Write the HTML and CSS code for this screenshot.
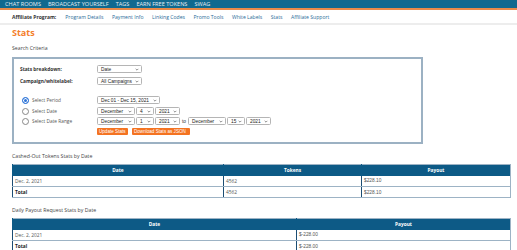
FILE: index.html
```html
<!DOCTYPE html>
<html>
<head>
<meta charset="utf-8">
<link rel="stylesheet" href="styles.css">
</head>
<body>
<div class="topnav">
  <span>Chat Rooms</span><span>Broadcast Yourself</span><span>Tags</span><span>Earn Free Tokens</span><span>Swag</span>
</div>
<div class="subnav">
  <span class="sub-label">Affiliate Program:</span>
  <a>Program Details</a><a>Payment Info</a><a>Linking Codes</a><a>Promo Tools</a><a>White Labels</a><a>Stats</a><a>Affiliate Support</a>
</div>
<div class="main">
  <h1 class="title">Stats</h1>
  <div class="section-title">Search Criteria</div>
  <div class="criteria">
    <div class="row r1">
      <div class="lbl">Stats breakdown:</div>
      <div class="sel w45"><span>Date</span><svg viewBox="0 0 6 4"><polyline points="1,1 3,3 5,1"/></svg></div>
    </div>
    <div class="row r2">
      <div class="lbl">Campaign/whitelabel:</div>
      <div class="sel w45"><span>All Campaigns</span><svg viewBox="0 0 6 4"><polyline points="1,1 3,3 5,1"/></svg></div>
    </div>
    <div class="row r3">
      <div class="radio-lbl"><span class="radio on"></span>Select Period</div>
      <div class="sel w63"><span>Dec 01 - Dec 15, 2021</span><svg viewBox="0 0 6 4"><polyline points="1,1 3,3 5,1"/></svg></div>
    </div>
    <div class="row r4">
      <div class="radio-lbl"><span class="radio"></span>Select Date</div>
      <div class="ctrls">
        <div class="sel w38"><span>December</span><svg viewBox="0 0 6 4"><polyline points="1,1 3,3 5,1"/></svg></div>
        <div class="sel w19"><span>4</span><svg viewBox="0 0 6 4"><polyline points="1,1 3,3 5,1"/></svg></div>
        <div class="sel w25"><span>2021</span><svg viewBox="0 0 6 4"><polyline points="1,1 3,3 5,1"/></svg></div>
      </div>
    </div>
    <div class="row r5">
      <div class="radio-lbl"><span class="radio"></span>Select Date Range</div>
      <div class="ctrls">
        <div class="sel w38"><span>December</span><svg viewBox="0 0 6 4"><polyline points="1,1 3,3 5,1"/></svg></div>
        <div class="sel w19"><span>1</span><svg viewBox="0 0 6 4"><polyline points="1,1 3,3 5,1"/></svg></div>
        <div class="sel w25"><span>2021</span><svg viewBox="0 0 6 4"><polyline points="1,1 3,3 5,1"/></svg></div>
        <span class="to">to</span>
        <div class="sel w38"><span>December</span><svg viewBox="0 0 6 4"><polyline points="1,1 3,3 5,1"/></svg></div>
        <div class="sel w19"><span>15</span><svg viewBox="0 0 6 4"><polyline points="1,1 3,3 5,1"/></svg></div>
        <div class="sel w25"><span>2021</span><svg viewBox="0 0 6 4"><polyline points="1,1 3,3 5,1"/></svg></div>
      </div>
    </div>
    <div class="row r6">
      <div class="lbl"></div>
      <div class="ctrls btns">
        <span class="btn">Update Stats</span>
        <span class="btn">Download Stats as JSON</span>
      </div>
    </div>
  </div>

  <div class="section-title t2">Cashed-Out Tokens Stats by Date</div>
  <table class="stats t-one">
    <colgroup><col class="c1"><col class="c2"><col class="c3"></colgroup>
    <thead><tr><th>Date</th><th>Tokens</th><th>Payout</th></tr></thead>
    <tbody>
      <tr><td>Dec. 2, 2021</td><td>4562</td><td class="num">$228.10</td></tr>
      <tr><td class="b">Total</td><td>4562</td><td class="num">$228.10</td></tr>
    </tbody>
  </table>

  <div class="section-title t2">Daily Payout Request Stats by Date</div>
  <table class="stats t-two">
    <colgroup><col class="d1"><col class="d2"></colgroup>
    <thead><tr><th>Date</th><th>Payout</th></tr></thead>
    <tbody>
      <tr><td>Dec. 2, 2021</td><td class="num">$-228.00</td></tr>
      <tr><td class="b">Total</td><td class="num">$-228.00</td></tr>
    </tbody>
  </table>
</div>
</body>
</html>
```

FILE: styles.css
```css
* { box-sizing: border-box; }
html, body { margin: 0; padding: 0; background: #fff; }
body { font-family: "Open Sans", "DejaVu Sans", sans-serif; color: #444; overflow: hidden; }

.topnav {
  height: 10px;
  background: #10698f;
  border-bottom: 2px solid #e88a4a;
  display: flex;
  align-items: center;
  padding-left: 5px;
  gap: 7px;
  overflow: hidden;
}
.topnav span {
  color: #e6eef3;
  text-transform: uppercase;
  font-size: 5.6px;
  line-height: 8px;
}

.subnav {
  height: 15px;
  border-bottom: 2px solid #ededed;
  display: flex;
  align-items: center;
  padding-left: 12px;
  gap: 8.5px;
}
.subnav .sub-label { font-weight: 700; color: #333; font-size: 5px; margin-right: 0.5px; }
.subnav a { color: #2b6b98; font-size: 5.1px; }

.main { padding-left: 12px; padding-right: 7px; }
.title {
  margin: 2px 0 0;
  font-size: 9px;
  line-height: 12px;
  color: #f47e2b;
  font-weight: 700;
}
.section-title {
  margin-top: 5px;
  font-size: 5.2px;
  line-height: 8px;
  color: #444;
}
.section-title.t2 { margin-top: 8px; }

.criteria {
  margin-top: 5px;
  width: 411px;
  height: 87px;
  border: 2px solid #9cb1c3;
  padding: 6px 0 0 6px;
}
.row { display: flex; align-items: center; }
.lbl { width: 77px; font-weight: 700; font-size: 4.8px; color: #333; }
.r2 { margin-top: 4px; }
.r3 { margin-top: 11px; }
.r4 { margin-top: 3px; }
.r5 { margin-top: 2px; }
.r6 { margin-top: 3px; }
.radio-lbl { width: 77px; display: flex; align-items: center; font-size: 4.8px; color: #555; padding-left: 2px; }
.radio {
  width: 7px; height: 7px; border-radius: 50%;
  border: 0.8px solid #888;
  margin-right: 3px;
  background: #fff;
  flex: none;
}
.radio.on {
  border: 1.5px solid #2d74d8;
  background: #2d74d8;
  box-shadow: inset 0 0 0 1px #fff;
}
.ctrls { display: flex; align-items: center; gap: 1px; }
.sel {
  height: 8px;
  border: 0.8px solid #b5b5b5;
  border-radius: 1.5px;
  background: #fff;
  display: flex;
  align-items: center;
  justify-content: space-between;
  padding: 0 2px 0 3px;
  font-family: "Liberation Sans", Arial, sans-serif;
  font-size: 4.8px;
  color: #222;
}
.sel svg { width: 4px; height: 3px; fill: none; stroke: #444; stroke-width: 0.9; }
.w45 { width: 45px; }
.w63 { width: 63px; }
.w38 { width: 38px; }
.w19 { width: 18px; }
.w25 { width: 25px; }
.to { font-family: "Liberation Sans", Arial, sans-serif; font-size: 4.8px; color: #333; margin: 0 1px; }
.btns { gap: 4px; }
.btn {
  height: 7px;
  background: #f47321;
  color: #fff;
  border-radius: 1px;
  font-family: "Liberation Sans", Arial, sans-serif;
  font-size: 4.6px;
  line-height: 7px;
  padding: 0 2px;
}
.btn:first-child { width: 31px; }
.btn:last-child { width: 58px; }

.stats {
  margin-top: 4px;
  width: 498px;
  border-collapse: collapse;
  table-layout: fixed;
  border: 1.5px solid #9db3c5;
  font-size: 4.8px;
}
.stats th {
  background: #0d5a86;
  color: #fff;
  font-weight: 700;
  height: 11px;
  padding: 0;
  text-align: center;
  border-left: 1px solid #0d5a86;
}
.stats td {
  height: 11px;
  padding: 0 2px;
  color: #555;
  border-bottom: 1.5px solid #9db3c5;
  border-left: 1px solid #1b4d73;
}
.stats td.num { font-family: "Liberation Sans", Arial, sans-serif; }
.stats td.b { font-weight: 700; color: #222; }
.t-one .c1 { width: 211px; }
.t-one .c2 { width: 138px; }
.t-one .c3 { width: 149px; }
.t-two .d1 { width: 284px; }
.t-two .d2 { width: 214px; }
```
